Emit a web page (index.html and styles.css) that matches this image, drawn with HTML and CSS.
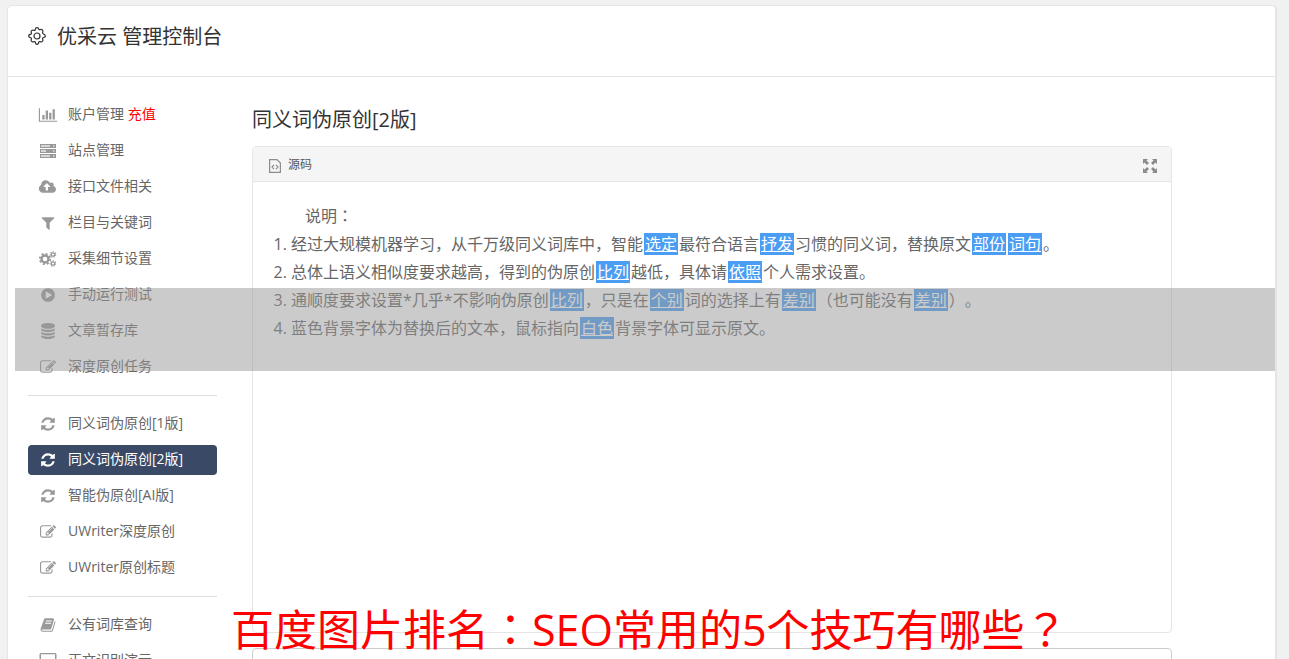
FILE: index.html
```html
<!DOCTYPE html>
<html lang="zh-CN">
<head>
  <meta charset="UTF-8">
  <meta name="viewport" content="width=device-width, initial-scale=1.0">
  <title>优采云 管理控制台</title>
  <link rel="stylesheet" href="styles.css">
</head>
<body>
  <!-- icon set -->
  <svg class="sprite" aria-hidden="true">
    <symbol id="i-chart" viewBox="0 0 2048 1792"><path d="M640 896v512h-256v-512h256zm384-512v1024h-256v-1024h256zm1024 1152v128h-2048v-1536h128v1408h1920zm-640-896v768h-256v-768h256zm384-384v1152h-256v-1152h256z"/></symbol>
    <symbol id="i-server" viewBox="0 0 16 16"><path fill-rule="evenodd" d="M0 1h16v4H0zM1 2v2h9V2zM13 2.500v1h1.500v-1zM0 6h16v4H0zM1 7v2h5V7zM13 7.500v1h1.500v-1zM0 11h16v4H0zM1 12v2h9v-2zM13 12.500v1h1.500v-1z"/><path opacity=".4" d="M1 2h9v2H1zM1 7h5v2H1zM1 12h9v2H1z"/></symbol>
    <symbol id="i-cloud" viewBox="0 0 1920 1792"><path d="M1216 864q0-14-9-23l-352-352q-9-9-23-9t-23 9l-351 351q-10 12-10 24 0 14 9 23t23 9h224v352q0 13 9.500 22.500t22.500 9.500h192q13 0 22.500-9.500t9.500-22.500v-352h224q13 0 22.500-9.500t9.500-22.500zm640 288q0 159-112.500 271.500t-271.500 112.500h-1088q-185 0-316.500-131.500t-131.500-316.500q0-130 70-240t188-165q-2-30-2-43 0-212 150-362t362-150q156 0 285.500 87t188.500 231q71-62 166-62 106 0 181 75t75 181q0 76-41 138 130 31 213.500 135.500t83.500 238.500z"/></symbol>
    <symbol id="i-filter" viewBox="0 0 1792 1792"><path d="M1595 295q17 41-14 70l-493 493v742q0 42-39 59-13 5-25 5-27 0-45-19l-256-256q-19-19-19-45v-486l-493-493q-31-29-14-70 17-39 59-39h1280q42 0 59 39z"/></symbol>
    <symbol id="i-cogs" viewBox="0 0 18 16">
      <g fill="none" stroke="currentColor">
        <circle cx="6" cy="8" r="3.500" stroke-width="2.400"/>
        <circle cx="6" cy="8" r="5.200" stroke-width="1.800" stroke-dasharray="2.040 2.040"/>
        <circle cx="14" cy="3.500" r="1.700" stroke-width="1.300"/>
        <circle cx="14" cy="3.500" r="2.700" stroke-width="1.100" stroke-dasharray="1.210 1.210"/>
        <circle cx="14" cy="12.500" r="1.700" stroke-width="1.300"/>
        <circle cx="14" cy="12.500" r="2.700" stroke-width="1.100" stroke-dasharray="1.210 1.210"/>
      </g>
    </symbol>
    <symbol id="i-play" viewBox="0 0 1792 1792"><path d="M896 128q209 0 385.500 103t279.500 279.500 103 385.500-103 385.500-279.500 279.500-385.500 103-385.500-103-279.500-279.500-103-385.500 103-385.500 279.500-279.500 385.500-103zm384 823q32-18 32-55t-32-55l-544-320q-31-19-64-1-32 19-32 56v640q0 37 32 56 16 8 32 8 17 0 32-9z"/></symbol>
    <symbol id="i-database" viewBox="0 0 1792 1792"><path d="M896 768q237 0 443-43t325-127v170q0 69-103 128t-280 93.500-385 34.500-385-34.500-280-93.500-103-128v-170q119 84 325 127t443 43zm0 768q237 0 443-43t325-127v170q0 69-103 128t-280 93.500-385 34.500-385-34.500-280-93.500-103-128v-170q119 84 325 127t443 43zm0-384q237 0 443-43t325-127v170q0 69-103 128t-280 93.500-385 34.500-385-34.500-280-93.500-103-128v-170q119 84 325 127t443 43zm0-1152q208 0 385 34.500t280 93.500 103 128v128q0 69-103 128t-280 93.500-385 34.500-385-34.500-280-93.500-103-128v-128q0-69 103-128t280-93.500 385-34.500z"/></symbol>
    <symbol id="i-edit" viewBox="0 0 1792 1792"><path d="M888 1184l116-116-152-152-116 116v56h96v96h56zm440-720q-16-16-33 1l-350 350q-17 17-1 33t33-1l350-350q17-17 1-33zm80 594v190q0 119-84.500 203.500t-203.500 84.500h-832q-119 0-203.500-84.500t-84.500-203.500v-832q0-119 84.500-203.500t203.500-84.500h832q63 0 117 25 15 7 18 23 3 17-9 29l-49 49q-14 14-32 8-23-6-45-6h-832q-66 0-113 47t-47 113v832q0 66 47 113t113 47h832q66 0 113-47t47-113v-126q0-13 9-22l64-64q15-15 35-7t20 29zm-96-738l288 288-672 672h-288v-288zm444 132l-92 92-288-288 92-92q28-28 68-28t68 28l152 152q28 28 28 68t-28 68z"/></symbol>
    <symbol id="i-refresh" viewBox="0 0 1792 1792"><path d="M1639 1056q0 5-1 7-64 268-268 434.500t-478 166.500q-146 0-282.500-55t-243.500-157l-129 129q-19 19-45 19t-45-19-19-45v-448q0-26 19-45t45-19h448q26 0 45 19t19 45-19 45l-137 137q71 66 161 102t187 36q134 0 250-65t186-179q11-17 53-117 8-23 30-23h192q13 0 22.500 9.500t9.500 22.500zm25-800v448q0 26-19 45t-45 19h-448q-26 0-45-19t-19-45 19-45l138-138q-148-137-349-137-134 0-250 65t-186 179q-11 17-53 117-8 23-30 23h-199q-13 0-22.500-9.500t-9.500-22.500v-7q65-268 270-434.500t480-166.500q146 0 284 55.500t245 156.500l130-129q19-19 45-19t45 19 19 45z"/></symbol>
    <symbol id="i-book" viewBox="0 0 1792 1792"><path d="M1703 478q40 57 18 129l-275 906q-19 64-76.500 107.500t-122.500 43.500h-923q-77 0-148.500-53.500t-99.500-131.500q-24-67-2-127 0-4 3-27t4-37q1-8-3-21.500t-3-19.500q2-11 8-21t16.500-23.500 16.500-23.500q23-38 45-91.500t30-91.500q3-10 .5-30t-.5-28q3-11 17-28t17-23q21-36 42-92t25-90q1-9-2.500-32t.5-28q4-13 22-30.500t22-22.500q19-26 42.500-84.500t27.500-96.500q1-8-3-25.500t-2-26.500q2-8 9-18t18-23 17-21q8-12 16.500-30.500t15-35 16-36 19.500-32 26.500-23.500 36-11.500 47.500 5.500l-1 3q38-9 51-9h761q74 0 114 56t18 130l-274 906q-36 119-71.500 153.500t-128.500 34.500h-869q-27 0-38 15-11 16-1 43 24 70 144 70h923q29 0 56-15.500t35-41.500l300-987q7-22 5-57 38 15 59 43zm-1064 2q-4 13 2 22.500t20 9.500h608q13 0 25.500-9.500t16.500-22.500l21-64q4-13-2-22.500t-20-9.500h-608q-13 0-25.500 9.500t-16.500 22.500zm-83 256q-4 13 2 22.500t20 9.500h608q13 0 25.500-9.500t16.500-22.500l21-64q4-13-2-22.500t-20-9.500h-608q-13 0-25.500 9.500t-16.500 22.500z"/></symbol>
    <symbol id="i-laptop" viewBox="0 0 20 16"><path fill-rule="evenodd" d="M3 0h14q1.500 0 1.500 1.500v9q0 1.500-1.500 1.500H3q-1.500 0-1.500-1.500v-9Q1.500 0 3 0zM3 1.200v9.600h14V1.200zM0 13h20v1.500q-1 1-2 1H2q-1 0-2-1z"/></symbol>
    <symbol id="i-gear" viewBox="0 0 18 18">
      <g fill="none" stroke="currentColor" stroke-width="1.200">
        <path stroke-linejoin="round" d="M7.200 2.400Q7.500.7 9 .7t1.800 1.700q.5.200 1 .4 1.500-1 2.600.1t.1 2.600q.3.500.4 1Q17.300 7.500 17.300 9t-2.400 1.800q-.1.500-.4 1 1 1.500-.1 2.600t-2.600.1q-.5.300-1 .4Q10.500 17.300 9 17.300t-1.800-2.400q-.5-.1-1-.4-1.500 1-2.600-.1t-.1-2.600q-.3-.5-.4-1Q.7 10.500.7 9t2.400-1.800q.1-.5.400-1-1-1.500.1-2.600t2.600-.1q.5-.300 1-.4z"/>
        <circle cx="9" cy="9" r="3"/>
      </g>
    </symbol>
    <symbol id="i-source" viewBox="0 0 12 14"><path fill="none" stroke="currentColor" stroke-width="1.200" d="M.6.600h7.400l3.400 3.400v9.400H.600zM5 5.800 3 8l2 2.200M7 5.800 9 8l-2 2.200"/></symbol>
    <symbol id="i-expand" viewBox="0 0 14 14"><path d="M0 0h5L3.500 1.500 6 4 4 6 1.500 3.500 0 5zM14 0v5l-1.500-1.500L10 6 8 4l2.500-2.500L9 0zM0 14V9l1.500 1.500L4 8l2 2-2.500 2.500L5 14zM14 14H9l1.500-1.500L8 10l2-2 2.500 2.500L14 9z"/></symbol>
  </svg>

  <div class="container">
    <header class="header">
      <svg class="gear"><use href="#i-gear"/></svg>
      <h1>优采云 管理控制台</h1>
    </header>

    <div class="content">
      <nav class="sidebar">
        <ul>
          <li><a href="#"><svg class="icon"><use href="#i-chart"/></svg><span>账户管理 <b>充值</b></span></a></li>
          <li><a href="#"><svg class="icon"><use href="#i-server"/></svg><span>站点管理</span></a></li>
          <li><a href="#"><svg class="icon"><use href="#i-cloud"/></svg><span>接口文件相关</span></a></li>
          <li><a href="#"><svg class="icon"><use href="#i-filter"/></svg><span>栏目与关键词</span></a></li>
          <li><a href="#"><svg class="icon"><use href="#i-cogs"/></svg><span>采集细节设置</span></a></li>
          <li><a href="#"><svg class="icon"><use href="#i-play"/></svg><span>手动运行测试</span></a></li>
          <li><a href="#"><svg class="icon"><use href="#i-database"/></svg><span>文章暂存库</span></a></li>
          <li><a href="#"><svg class="icon"><use href="#i-edit"/></svg><span>深度原创任务</span></a></li>
        </ul>
        <ul>
          <li><a href="#"><svg class="icon"><use href="#i-refresh"/></svg><span>同义词伪原创[1版]</span></a></li>
          <li><a href="#" class="active"><svg class="icon"><use href="#i-refresh"/></svg><span>同义词伪原创[2版]</span></a></li>
          <li><a href="#"><svg class="icon"><use href="#i-refresh"/></svg><span>智能伪原创[AI版]</span></a></li>
          <li><a href="#"><svg class="icon"><use href="#i-edit"/></svg><span>UWriter深度原创</span></a></li>
          <li><a href="#"><svg class="icon"><use href="#i-edit"/></svg><span>UWriter原创标题</span></a></li>
        </ul>
        <ul>
          <li><a href="#"><svg class="icon"><use href="#i-book"/></svg><span>公有词库查询</span></a></li>
          <li><a href="#"><svg class="icon"><use href="#i-laptop"/></svg><span>正文识别演示</span></a></li>
        </ul>
      </nav>

      <main class="main">
        <h2>同义词伪原创[2版]</h2>
        <div class="editor">
          <div class="toolbar">
            <button type="button" class="source"><svg><use href="#i-source"/></svg>源码</button>
            <button type="button" class="expand" aria-label="全屏"><svg><use href="#i-expand"/></svg></button>
          </div>
          <div class="editor-body">
            <p>说明<span class="mark" lang="zh-TW">：</span></p>
            <ol>
              <li>经过大规模机器学习，从千万级同义词库中，智能<u>选定</u>最符合语言<u>抒发</u>习惯的同义词，替换原文<u>部份</u><u>词句</u>。</li>
              <li>总体上语义相似度要求越高，得到的伪原创<u>比列</u>越低，具体请<u>依照</u>个人需求设置。</li>
              <li>通顺度要求设置*几乎*不影响伪原创<u>比列</u>，只是在<u>个别</u>词的选择上有<u>差别</u>（也可能没有<u>差别</u>）。</li>
              <li>蓝色背景字体为替换后的文本，鼠标指向<u>白色</u>背景字体可显示原文。</li>
            </ol>
          </div>
        </div>
        <textarea class="result" aria-label="结果"></textarea>
      </main>
    </div>
  </div>

  <div class="shade"></div>
  <div class="caption">百度图片排名<span class="mark" lang="zh-TW">：</span>SEO常用的5个技巧有哪些<span class="mark" lang="zh-TW">？</span></div>
</body>
</html>
```
FILE: styles.css
```css
* {
  box-sizing: border-box;
}
html {
  overflow: hidden;
}
body {
  margin: 0;
  padding: 5px 12px 0 7px;
  background-color: #f1f1f1;
  color: #666;
  font-family: "Open Sans", "Noto Sans CJK SC", sans-serif;
  font-size: 14px;
  text-spacing-trim: space-all;
}
h1, h2, p, ul, ol {
  margin: 0;
  padding: 0;
  font-weight: normal;
}
svg {
  fill: currentColor;
}
button {
  padding: 0;
  border: 0;
  background: none;
  font: inherit;
  cursor: pointer;
}
.sprite {
  display: none;
}
/* centred full-width punctuation */
.mark {
  font-family: "Noto Sans CJK TC", sans-serif;
  line-height: 1;
}
.container {
  background-color: #fff;
  border: 1px solid #e5e5e5;
  border-right-width: 2px;
  border-radius: 5px;
}
.header {
  display: flex;
  align-items: center;
  gap: 11px;
  height: 71px;
  padding: 0 20px 8px;
  border-bottom: 1px solid #e5e5e5;
  color: #333;
}
.header h1 {
  font-size: 20px;
  line-height: 28px;
}
.gear {
  width: 18px;
  height: 18px;
  margin-bottom: 2px;
}
.content {
  display: flex;
  gap: 35px;
  padding: 23px 20px;
}

/* sidebar */
.sidebar {
  flex: 0 0 189px;
}
.sidebar ul {
  display: flex;
  flex-direction: column;
  gap: 6px;
  list-style: none;
}
.sidebar ul + ul {
  margin-top: 13px;
  padding-top: 13px;
  border-top: 1px solid #ddd;
}
.sidebar a {
  display: flex;
  align-items: center;
  gap: 10px;
  height: 30px;
  padding: 0 10px;
  border-radius: 4px;
  color: #666;
  text-decoration: none;
}
.sidebar a.active {
  background-color: #3a4a66;
  color: #fff;
}
.sidebar span {
  line-height: 20px;
  padding-bottom: 2px;
}
.sidebar b {
  color: #f00;
  font-weight: normal;
}
.icon {
  width: 20px;
  height: 16px;
  color: #999;
}
.active .icon {
  color: #fff;
}

/* editor */
.main {
  flex: 0 1 920px;
}
.main h2 {
  margin: 5px 0 12px;
  color: #333;
  font-size: 20px;
  line-height: 29px;
}
.editor {
  border: 1px solid #e5e5e5;
  border-radius: 4px;
}
.toolbar {
  display: flex;
  align-items: center;
  justify-content: space-between;
  height: 35px;
  padding: 0 14px 0 16px;
  background-color: #f5f5f5;
  border-bottom: 1px solid #e5e5e5;
}
.toolbar svg {
  margin-top: 3px;
  color: #8c8c8c;
}
.source {
  display: flex;
  align-items: center;
  gap: 7px;
  color: #555;
  font-size: 12px;
}
.source svg {
  width: 12px;
  height: 14px;
}
.expand svg {
  display: block;
  width: 14px;
  height: 14px;
}
.editor-body {
  min-height: 450px;
  padding: 20px;
  font-size: 16px;
  line-height: 28px;
}
.editor-body p {
  text-indent: 2em;
}
.editor-body ol {
  padding-left: 18px;
}
.editor-body u {
  margin: 0 1px;
  padding: 0 1px;
  background-color: #4b9df3;
  color: #fff;
}
.result {
  display: block;
  width: 100%;
  height: 120px;
  margin-top: 15px;
  border: 1px solid #ccc;
  border-radius: 4px;
  resize: none;
}

/* caption over the page */
.shade {
  position: absolute;
  top: 288px;
  left: 15px;
  right: 14px;
  height: 83px;
  background-color: rgba(151, 151, 151, 0.5);
}
.caption {
  position: absolute;
  top: 600px;
  left: 231px;
  color: #f00;
  font-size: 43px;
  line-height: 60px;
  white-space: nowrap;
}
```
